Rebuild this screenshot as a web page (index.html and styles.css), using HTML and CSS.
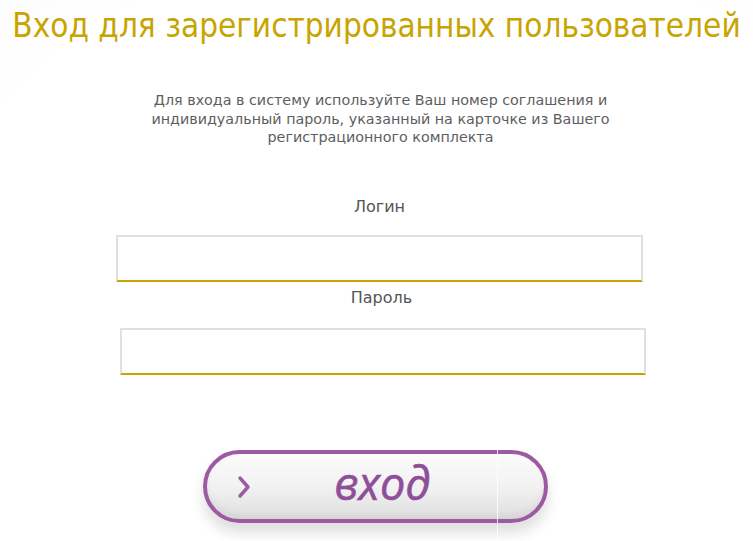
FILE: index.html
```html
<!DOCTYPE html>
<html lang="ru">
<head>
<meta charset="utf-8">
<link rel="stylesheet" href="styles.css">
</head>
<body>
<div class="page">
  <h1 class="title">Вход для зарегистрированных пользователей</h1>
  <p class="intro">Для входа в систему используйте Ваш номер соглашения и<br>индивидуальный пароль, указанный на карточке из Вашего<br>регистрационного комплекта</p>
  <form class="form">
    <label class="label label-login" for="login">Логин</label>
    <input class="field field-login" id="login" type="text">
    <label class="label label-pass" for="pass">Пароль</label>
    <input class="field field-pass" id="pass" type="password">
    <div class="btn-wrap">
      <button type="button" class="btn">
        <svg class="chev" width="14" height="24" viewBox="0 0 14 24"><polyline points="3,3 11,12 3,21" fill="none" stroke="#9c5aa2" stroke-width="3.4" stroke-linecap="round" stroke-linejoin="round"/></svg>
        <span class="btn-text">вход</span>
        <span class="seam"></span>
      </button>
    </div>
  </form>
</div>
</body>
</html>
```
FILE: styles.css
```css
html, body {
  margin: 0;
  padding: 0;
}
body {
  width: 753px;
  height: 541px;
  overflow: hidden;
  background: radial-gradient(ellipse 900px 700px at 55% 60%, #ffffff 55%, #f2f2f2 100%);
  font-family: "DejaVu Sans Condensed", "DejaVu Sans", sans-serif;
}
.page {
  display: flex;
  flex-direction: column;
  align-items: center;
}
.title {
  margin: 6px 0 0 0;
  font-weight: normal;
  font-size: 33px;
  line-height: 40px;
  color: #c8a400;
  white-space: nowrap;
}
.intro {
  margin: 45px 0 0 0;
  padding-left: 8px;
  font-family: "DejaVu Sans", sans-serif;
  font-size: 14.3px;
  line-height: 18.5px;
  color: #5e5e5e;
  text-align: center;
  white-space: nowrap;
}
.form {
  display: flex;
  flex-direction: column;
  align-items: center;
  width: 100%;
}
.label {
  font-family: "DejaVu Sans", sans-serif;
  font-size: 16px;
  line-height: 20px;
  color: #555;
}
.label-login {
  margin-top: 50px;
  margin-left: 6px;
}
.label-pass {
  margin-top: 6px;
  margin-left: 10px;
}
.field {
  box-sizing: border-box;
  height: 47px;
  border: 2px solid #e0e0e0;
  border-bottom: 2px solid #c8a400;
  background: #fff;
  outline: none;
  padding: 0 8px;
  font-size: 15px;
}
.field-login {
  width: 527px;
  margin-top: 18px;
  margin-left: 6px;
}
.field-pass {
  width: 526px;
  margin-top: 20px;
  margin-left: 12px;
}
.btn-wrap {
  margin-top: 75px;
  margin-left: -2px;
  position: relative;
}
.btn {
  position: relative;
  box-sizing: border-box;
  width: 345px;
  height: 73px;
  border: 4px solid #9c5aa2;
  border-radius: 37px;
  background: linear-gradient(#fbfbfb 0%, #f2f2f2 50%, #dedede 100%);
  box-shadow: 0 10px 14px rgba(0,0,0,0.13), inset 0 -4px 6px rgba(0,0,0,0.05);
  display: flex;
  align-items: center;
  justify-content: center;
  padding: 0;
  cursor: pointer;
}
.chev {
  position: absolute;
  left: 30px;
  top: 21px;
}
.btn-text {
  font-family: "Open Sans", "Noto Sans", sans-serif;
  font-style: italic;
  font-size: 45px;
  line-height: 50px;
  color: #8e4e98;
  margin-left: 14px;
  margin-top: -6px;
  -webkit-text-stroke: 0.6px #8e4e98;
}
.seam {
  position: absolute;
  left: 290px;
  top: -12px;
  bottom: -30px;
  width: 1px;
  background: rgba(255,255,255,0.8);
}
```
